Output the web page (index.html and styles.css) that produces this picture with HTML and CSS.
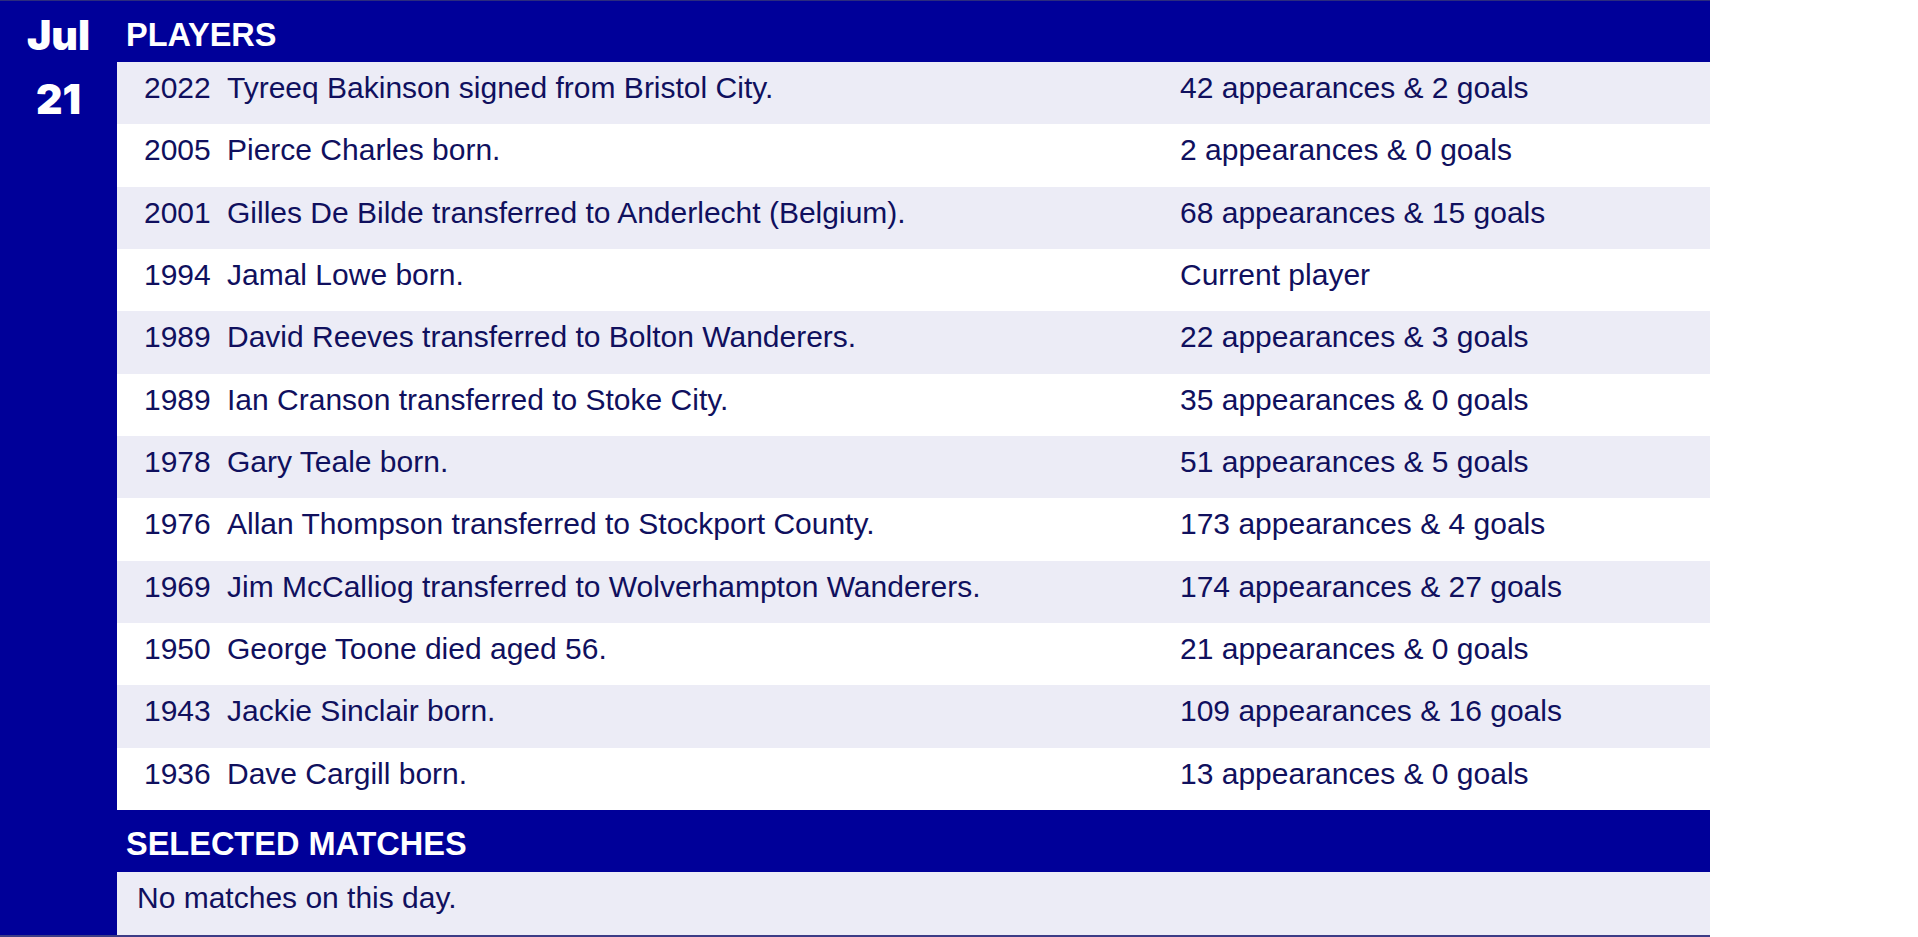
FILE: index.html
```html
<!DOCTYPE html>
<html lang="en">
<head>
<meta charset="utf-8">
<title>On this day - Jul 21</title>
<link rel="stylesheet" href="styles.css">
</head>
<body>
<div class="board">
  <div class="date">
    <div class="date-month">Jul</div>
    <div class="date-day">21</div>
  </div>
  <div class="content">
    <div class="section-head">PLAYERS</div>
    <div class="rows">
      <div class="row alt"><span class="year">2022</span><span class="desc">Tyreeq Bakinson signed from Bristol City.</span><span class="stats">42 appearances &amp; 2 goals</span></div>
      <div class="row"><span class="year">2005</span><span class="desc">Pierce Charles born.</span><span class="stats">2 appearances &amp; 0 goals</span></div>
      <div class="row alt"><span class="year">2001</span><span class="desc">Gilles De Bilde transferred to Anderlecht (Belgium).</span><span class="stats">68 appearances &amp; 15 goals</span></div>
      <div class="row"><span class="year">1994</span><span class="desc">Jamal Lowe born.</span><span class="stats">Current player</span></div>
      <div class="row alt"><span class="year">1989</span><span class="desc">David Reeves transferred to Bolton Wanderers.</span><span class="stats">22 appearances &amp; 3 goals</span></div>
      <div class="row"><span class="year">1989</span><span class="desc">Ian Cranson transferred to Stoke City.</span><span class="stats">35 appearances &amp; 0 goals</span></div>
      <div class="row alt"><span class="year">1978</span><span class="desc">Gary Teale born.</span><span class="stats">51 appearances &amp; 5 goals</span></div>
      <div class="row"><span class="year">1976</span><span class="desc">Allan Thompson transferred to Stockport County.</span><span class="stats">173 appearances &amp; 4 goals</span></div>
      <div class="row alt"><span class="year">1969</span><span class="desc">Jim McCalliog transferred to Wolverhampton Wanderers.</span><span class="stats">174 appearances &amp; 27 goals</span></div>
      <div class="row"><span class="year">1950</span><span class="desc">George Toone died aged 56.</span><span class="stats">21 appearances &amp; 0 goals</span></div>
      <div class="row alt"><span class="year">1943</span><span class="desc">Jackie Sinclair born.</span><span class="stats">109 appearances &amp; 16 goals</span></div>
      <div class="row"><span class="year">1936</span><span class="desc">Dave Cargill born.</span><span class="stats">13 appearances &amp; 0 goals</span></div>
    </div>
    <div class="section-head">SELECTED MATCHES</div>
    <div class="note">No matches on this day.</div>
  </div>
</div>
</body>
</html>
```

FILE: styles.css
```css
html, body {
  margin: 0;
  padding: 0;
  background: #ffffff;
}

body {
  font-family: "Liberation Sans", Arial, sans-serif;
  color: #10105e;
}

.board {
  display: flex;
  width: 1710px;
  height: 937px;
  box-sizing: border-box;
  background: #000099;
  border-top: 1px solid #2c2c7e;
  border-bottom: 2px solid #3c3c86;
}

.date {
  width: 117px;
  flex: none;
  display: flex;
  flex-direction: column;
  align-items: center;
  gap: 21px;
  padding-top: 13px;
  box-sizing: border-box;
  font-family: Inter, Lato, "Liberation Sans", sans-serif;
  font-weight: 900;
  font-size: 41px;
  line-height: 43px;
  color: #ffffff;
}

.content {
  flex: 1;
  display: flex;
  flex-direction: column;
}

.section-head {
  height: 61px;
  box-sizing: border-box;
  padding: 16px 0 0 9px;
  font-weight: 700;
  font-size: 32.5px;
  line-height: 37px;
  color: #ffffff;
  flex: none;
}

.rows + .section-head {
  height: 62px;
}

.rows {
  display: flex;
  flex-direction: column;
  flex: none;
}

.row {
  height: 62.33px;
  box-sizing: border-box;
  display: grid;
  grid-template-columns: 83px 953px 1fr;
  padding: 9px 0 0 27px;
  font-size: 30px;
  line-height: 34px;
  background: #ffffff;
  white-space: nowrap;
}

.row.alt {
  background: #ececf6;
}

.note {
  flex: 1;
  box-sizing: border-box;
  padding: 9px 0 0 20px;
  font-size: 30px;
  line-height: 34px;
  background: #ececf6;
}
```
